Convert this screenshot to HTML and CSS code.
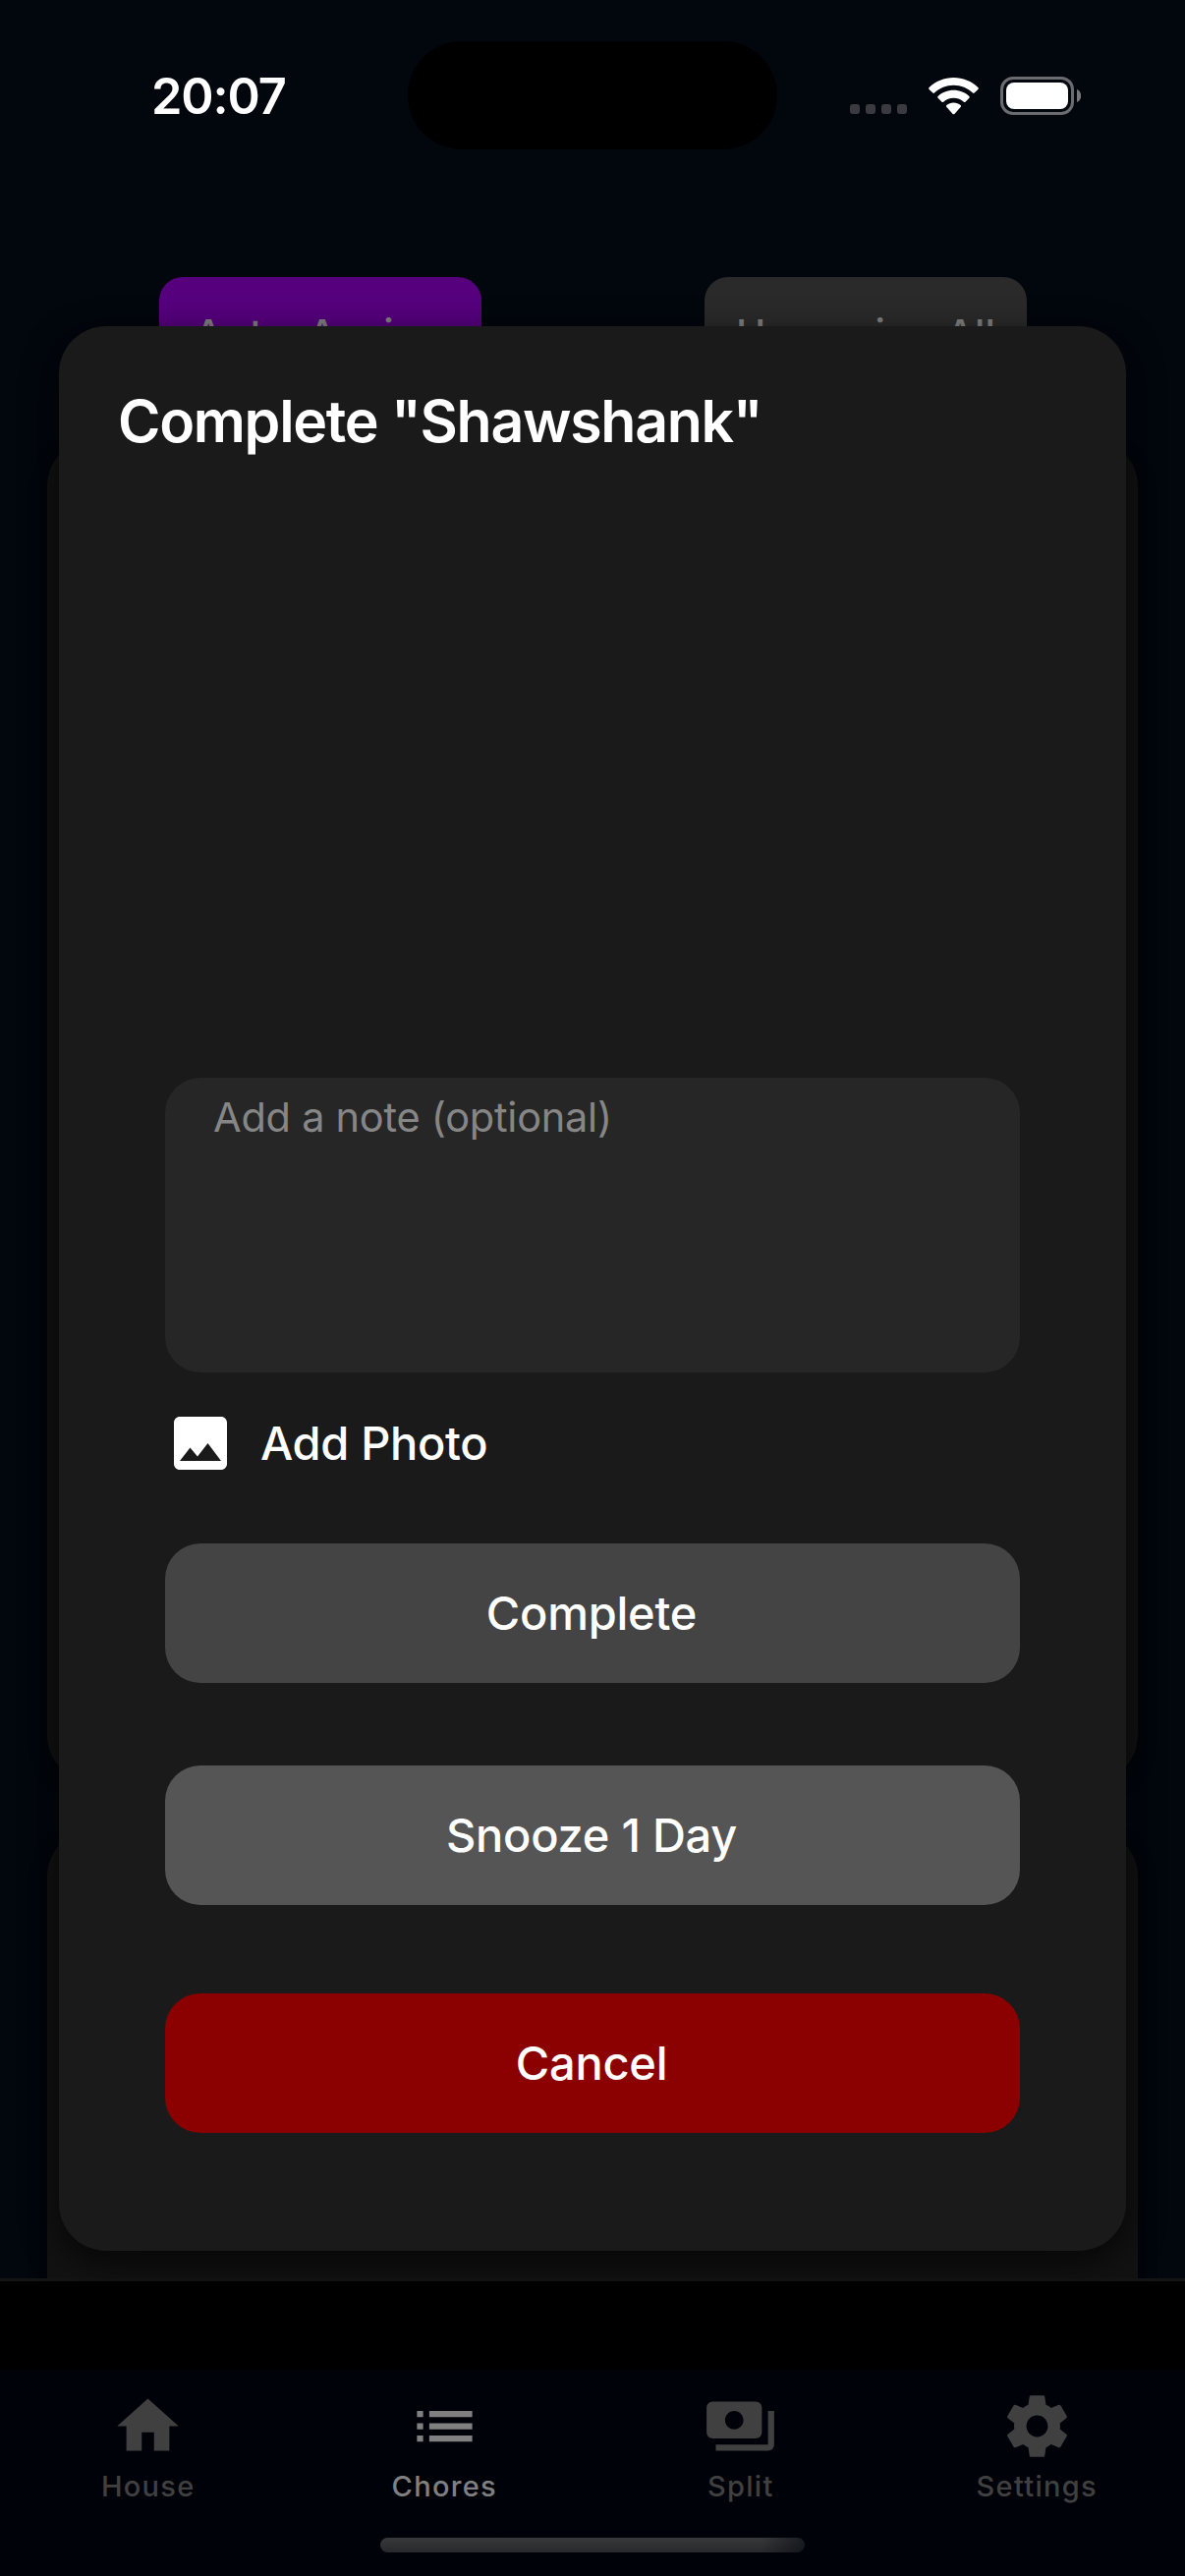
FILE: index.html
```html
<!DOCTYPE html>
<html lang="en">
<head>
<meta charset="utf-8">
<title>Chores</title>
<link rel="stylesheet" href="styles.css">
</head>
<body>
<div class="screen">
  <header class="status">
    <span class="clock">20:07</span>
    <span class="island"></span>
    <div class="indicators">
      <svg class="signal" viewBox="0 0 58 10" fill="#3b3b3f"><rect width="10" height="10" rx="3"/><rect x="16" width="10" height="10" rx="3"/><rect x="32" width="10" height="10" rx="3"/><rect x="48" width="10" height="10" rx="3"/></svg>
      <svg class="wifi" viewBox="0 0 51 38" fill="#fff">
        <path d="M25.500 0C16 0 7 3.700.6 10.100q-.9.900 0 1.800l3.700 3.700q.8.800 1.700 0C11.200 10.600 18 7.700 25.500 7.700S39.800 10.600 45 15.600q.9.800 1.700 0l3.700-3.700q.9-.9 0-1.800C44 3.700 35 0 25.500 0z"/>
        <path d="M25.500 12.800c-6.100 0-11.700 2.300-15.900 6.200q-.9.900 0 1.800l3.900 3.900q.8.800 1.700 0c2.700-2.500 6.300-4 10.300-4s7.600 1.500 10.300 4q.9.800 1.700 0l3.900-3.900q.9-.9 0-1.800c-4.200-3.900-9.800-6.200-15.900-6.200z"/>
        <path d="M25.500 25.500c-2.700 0-5.200 1-7.100 2.600q-1 .9 0 1.900l6.200 6.900q.9.900 1.800 0l6.200-6.900q1-1 0-1.900c-1.900-1.600-4.400-2.600-7.100-2.600z"/>
      </svg>
      <svg class="battery" viewBox="0 0 82 39"><rect x="1.500" y="1.500" width="72" height="36" rx="11.500" fill="none" stroke="#6b6c70" stroke-width="3"/><rect x="6" y="6" width="63" height="27" rx="8" fill="#fff"/><path d="M78 13c2.600 1 4.200 3.600 4.200 6.500S80.600 25 78 26z" fill="#77787b"/></svg>
    </div>
  </header>

  <main class="page">
    <div class="actions">
      <span class="action auto">Auto-Assign</span>
      <span class="action upcoming">Upcoming All</span>
    </div>
    <div class="card first"></div>
    <div class="card second"></div>
  </main>

  <footer class="footer">
    <nav class="tabs">
      <div class="tab"><svg viewBox="0 0 24 24"><path d="M10 20v-6h4v6h5v-8h3L12 3 2 12h3v8z"/></svg><span>House</span></div>
      <div class="tab active"><svg viewBox="0 0 24 24"><path d="M3 13h2v-2H3v2zm0 4h2v-2H3v2zm0-8h2V7H3v2zm4 4h14v-2H7v2zm0 4h14v-2H7v2zM7 7v2h14V7H7z"/></svg><span>Chores</span></div>
      <div class="tab"><svg viewBox="0 0 24 24"><path d="M19 14V6c0-1.100-.9-2-2-2H3c-1.100 0-2 .9-2 2v8c0 1.100.9 2 2 2h14c1.100 0 2-.9 2-2zm-9-1c-1.660 0-3-1.340-3-3s1.340-3 3-3 3 1.340 3 3-1.340 3-3 3zm13-6v11c0 1.100-.9 2-2 2H4v-2h17V7h2z"/></svg><span>Split</span></div>
      <div class="tab"><svg viewBox="0 0 24 24"><path d="M19.430 12.980c.04-.32.07-.64.07-.98s-.03-.66-.07-.98l2.110-1.650c.19-.15.24-.42.12-.64l-2-3.460c-.12-.22-.39-.3-.61-.22l-2.490 1c-.52-.4-1.080-.73-1.690-.98l-.38-2.650C14.460 2.180 14.250 2 14 2h-4c-.25 0-.46.18-.49.42l-.38 2.650c-.61.25-1.170.59-1.690.98l-2.490-1c-.23-.09-.49 0-.61.22l-2 3.460c-.13.22-.07.49.12.64l2.110 1.650c-.04.32-.07.65-.07.98s.03.66.07.98l-2.110 1.650c-.19.15-.24.42-.12.64l2 3.460c.12.22.39.3.61.22l2.490-1c.52.4 1.080.73 1.690.98l.38 2.650c.03.24.24.42.49.42h4c.25 0 .46-.18.49-.42l.38-2.650c.61-.25 1.170-.59 1.690-.98l2.490 1c.23.09.49 0 .61-.22l2-3.460c.12-.22.07-.49-.12-.64l-2.110-1.650zM12 15.500c-1.930 0-3.500-1.570-3.500-3.500s1.570-3.500 3.500-3.500 3.500 1.570 3.500 3.500-1.570 3.500-3.500 3.500z"/></svg><span>Settings</span></div>
    </nav>
    <div class="home-indicator"></div>
  </footer>

  <div class="overlay">
    <section class="modal">
      <h1 class="title">Complete "Shawshank"</h1>
      <div class="form">
        <div class="note">Add a note (optional)</div>
        <div class="photo">
          <svg viewBox="0 0 24 24" fill="#fff"><path d="M21 19V5c0-1.100-.9-2-2-2H5c-1.100 0-2 .9-2 2v14c0 1.100.9 2 2 2h14c1.100 0 2-.9 2-2zM8.500 13.500l2.500 3.010L14.500 12l4.500 6H5l3.500-4.500z"/></svg>
          <span>Add Photo</span>
        </div>
        <div class="button complete">Complete</div>
        <div class="button snooze">Snooze 1 Day</div>
        <div class="button cancel">Cancel</div>
      </div>
    </section>
  </div>
</div>
</body>
</html>
```
FILE: styles.css
```css
* { box-sizing: border-box; }
body { margin: 0; background: #02060d; font-family: Inter, "Liberation Sans", sans-serif; }
.screen { position: relative; display: flex; flex-direction: column; width: 1206px; height: 2622px; overflow: hidden; background: #02060d; color: #fff; }

/* Status bar */
.status { display: grid; grid-template-columns: 415px 376px 1fr; height: 180px; padding-top: 42px; flex: none; }
.clock { padding-left: 154px; font-size: 50.500px; font-weight: 600; line-height: 111px; letter-spacing: -1.100px; }
.island { height: 110px; border-radius: 55px; background: #000; }
.indicators { display: flex; height: 110px; padding-left: 74px; }
.indicators svg { flex: none; }
.signal { width: 58px; height: 10px; margin-top: 64px; }
.wifi { width: 51px; height: 38px; margin: 37px 0 0 22px; }
.battery { width: 82px; height: 39px; margin: 36px 0 0 22px; }

/* Dimmed page behind the dialog */
.page { flex: 1; display: flex; flex-direction: column; padding: 102px 48px 0; overflow: hidden; }
.actions { display: flex; justify-content: space-between; padding: 0 113px 0 114px; margin-bottom: 45px; flex: none; }
.action { width: 328px; height: 120px; padding-top: 32px; border-radius: 24px; text-align: center; font-size: 41px; font-weight: 500; line-height: 52px; letter-spacing: .2px; color: #808080; white-space: nowrap; }
.auto { background: #56007d; letter-spacing: 1.200px; }
.upcoming { background: #2a2a2a; }
.card { flex: none; border-radius: 48px; background: #121212; box-shadow: 0 6px 18px rgba(0, 0, 0, .4); }
.first { height: 1367px; margin-bottom: 48px; }
.second { height: 700px; }

/* Tab bar */
.footer { flex: none; display: flex; flex-direction: column; align-items: center; height: 303px; border-top: 3px solid #141414; background: linear-gradient(#000 90px, #00020a 90px); padding-top: 110px; }
.tabs { display: grid; grid-template-columns: repeat(4, 1fr); width: 100%; height: 151px; }
.tab { display: flex; flex-direction: column; align-items: center; color: #404040; font-size: 29px; font-weight: 450; line-height: 36px; letter-spacing: 1.300px; }
.tab svg { width: 75px; height: 75px; margin-bottom: 6px; fill: currentColor; }
.active { color: #808080; }
.home-indicator { width: 432px; height: 15px; border-radius: 8px; background: linear-gradient(90deg, transparent 90%, rgba(8, 12, 18, .65)), linear-gradient(#37383a, #28292c); }

/* Dialog */
.overlay { position: absolute; inset: 0; padding: 332px 60px 0; }
.modal { height: 1959px; padding: 61px 60px 0; border-radius: 48px; background: #1a1a1a; box-shadow: 0 12px 36px rgba(0, 0, 0, .7); }
.title { margin: 0; font-size: 59px; font-weight: 600; line-height: 72px; letter-spacing: -1.300px; white-space: nowrap; }
.form { display: flex; flex-direction: column; padding: 632px 48px 0; }
.note { height: 300px; padding: 14px 49px; border-radius: 36px; background: #262626; color: #868686; font-size: 41.500px; line-height: 52px; letter-spacing: -.250px; }
.photo { display: flex; align-items: center; gap: 25px; margin-top: 36px; height: 72px; font-size: 47px; font-weight: 500; letter-spacing: -.350px; }
.photo svg { width: 72px; height: 72px; }
.photo span { padding-bottom: 1px; }
.button { height: 142px; padding-right: 2px; border-radius: 36px; text-align: center; font-size: 47px; font-weight: 500; line-height: 142px; letter-spacing: -.250px; }
.complete { margin-top: 66px; background: #444; }
.snooze { margin-top: 84px; background: #555; }
.cancel { margin-top: 90px; background: #8b0000; }
```
